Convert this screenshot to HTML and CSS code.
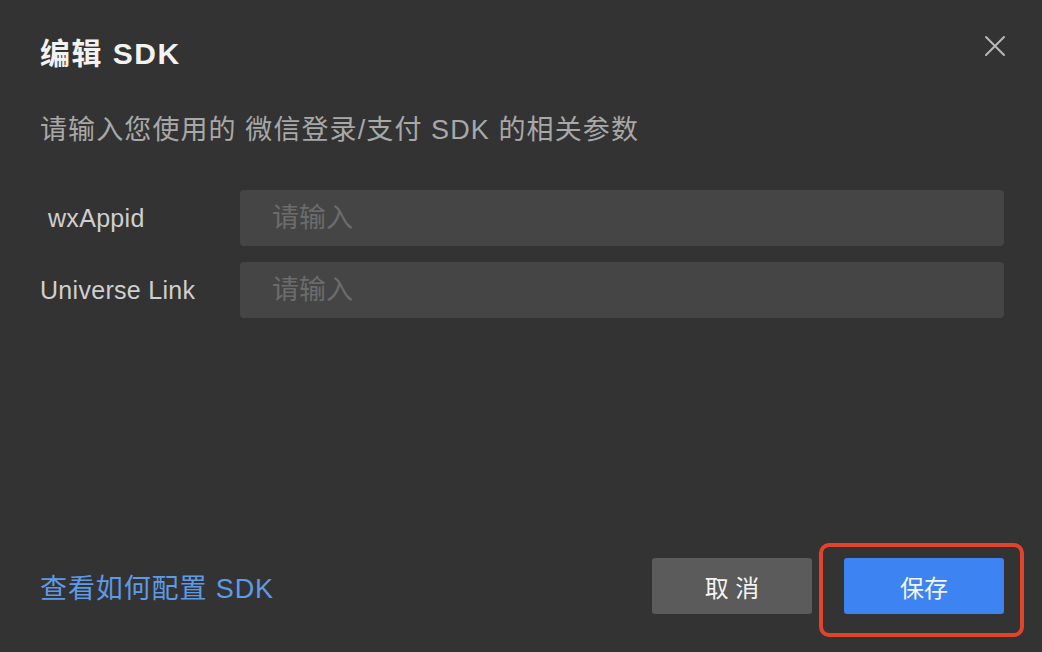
FILE: index.html
```html
<!DOCTYPE html>
<html lang="zh-CN">

<head>
  <meta charset="UTF-8">
  <meta name="viewport" content="width=device-width, initial-scale=1.0">
  <title>编辑 SDK</title>
  <link rel="stylesheet" href="styles.css">
</head>

<body>
  <!-- 弹窗 -->
  <div class="dialog">
    <!-- 标题 -->
    <div class="dialog-header">
      <div class="dialog-title">编辑 SDK</div>
      <div class="dialog-close">
        <svg width="22" height="22" viewBox="0 0 22 22">
          <path d="M2 2 L20 20 M20 2 L2 20" stroke="#b8b8b8" stroke-width="2" fill="none" stroke-linecap="round" />
        </svg>
      </div>
    </div>
    <div class="dialog-desc">请输入您使用的 微信登录/支付 SDK 的相关参数</div>

    <!-- 表单 -->
    <div class="form">
      <div class="form-row">
        <label class="form-label form-label-indent">wxAppid</label>
        <input class="form-input" type="text" placeholder="请输入">
      </div>
      <div class="form-row">
        <label class="form-label">Universe Link</label>
        <input class="form-input" type="text" placeholder="请输入">
      </div>
    </div>

    <!-- 底部 -->
    <div class="dialog-footer">
      <a class="help-link" href="#">查看如何配置 SDK</a>
      <div class="btns">
        <button class="btn btn-cancel">取 消</button>
        <span class="btn-mark">
          <button class="btn btn-primary">保存</button>
        </span>
      </div>
    </div>
  </div>
</body>

</html>
```

FILE: styles.css
```css
* {
  box-sizing: border-box;
}

body {
  margin: 0;
  padding: 0;
  background-color: #333333;
  font-family: "Liberation Sans", "Noto Sans CJK SC", sans-serif;
}

.dialog {
  height: 652px;
  padding: 34px 38px 38px 40px;

  display: flex;
  flex-direction: column;
}

.dialog-header {
  display: flex;
  justify-content: space-between;
  align-items: flex-start;
}

.dialog-title {
  font-size: 30px;
  line-height: 40px;
  font-weight: 600;
  letter-spacing: 1.5px;
  color: #f2f2f2;
}

.dialog-close {
  width: 22px;
  height: 22px;
  margin-top: 1px;
  margin-right: -2px;
  cursor: pointer;
}

.dialog-close svg {
  display: block;
}

.dialog-desc {
  margin-top: 39px;
  font-size: 27px;
  line-height: 34px;
  letter-spacing: 1.1px;
  color: #a8a8a8;
}

.form {
  margin-top: 43px;

  display: flex;
  flex-direction: column;
  gap: 16px;
}

.form-row {
  display: flex;
  align-items: center;
}

.form-label {
  width: 200px;
  flex-shrink: 0;
  font-size: 25px;
  letter-spacing: 0.3px;
  color: #cfcfcf;
}

.form-label-indent {
  padding-left: 8px;
}

.form-input {
  flex: 1;
  height: 56px;
  padding: 0 32px;

  border: none;
  border-radius: 4px;
  outline: none;
  background-color: #454545;

  font-family: inherit;
  font-size: 27px;
  color: #dddddd;
}

.form-input::placeholder {
  color: #6c6c6c;
}

.dialog-footer {
  margin-top: auto;

  display: flex;
  justify-content: space-between;
  align-items: center;
}

.help-link {
  font-size: 27px;
  letter-spacing: 0.9px;
  color: #5d9be8;
  text-decoration: none;
}

.btns {
  display: flex;
  gap: 32px;
}

.btn {
  width: 160px;
  height: 56px;

  border: none;
  border-radius: 3px;

  font-family: inherit;
  font-size: 24px;
  color: #f4f4f4;
  cursor: pointer;
}

.btn-cancel {
  background-color: #5b5b5b;
}

.btn-primary {
  display: block;
  background-color: #3d84f2;
}

/* 截图里的红色标注框 */
.btn-mark {
  position: relative;
  display: block;
}

.btn-mark::after {
  content: "";
  position: absolute;
  left: -25px;
  top: -15px;
  right: -20px;
  bottom: -23px;

  border: 4px solid #e2432b;
  border-radius: 10px;
  pointer-events: none;
}
```
